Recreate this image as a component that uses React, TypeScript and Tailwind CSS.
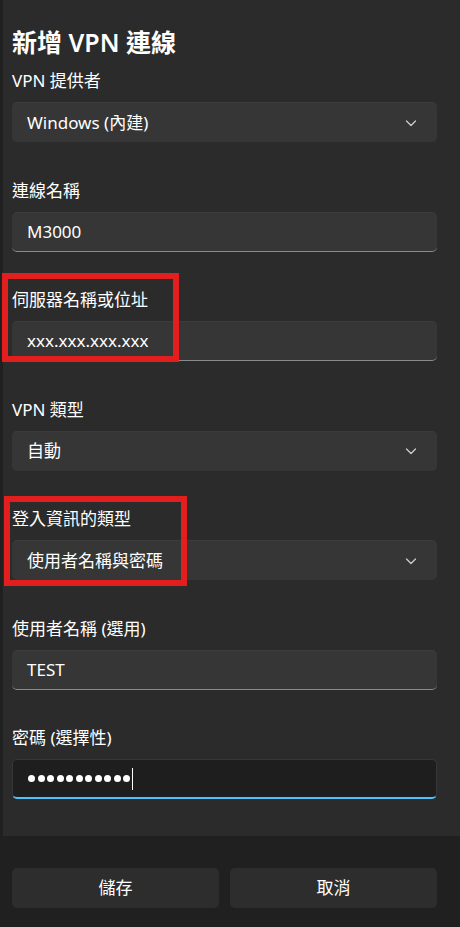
const FONT = "font-['Noto_Sans','Noto_Sans_CJK_TC',sans-serif]";

const Chevron = () => (
  <svg width="12" height="12" viewBox="0 0 12 12" fill="none" className="text-[#d0d0d0]">
    <polyline points="1.5,4 6,8.5 10.5,4" stroke="currentColor" strokeWidth="1.2" strokeLinecap="round" strokeLinejoin="round" />
  </svg>
);

type FieldProps = {
  label: string;
  value: string;
  kind: 'select' | 'input' | 'password';
};

const FIELDS: FieldProps[] = [
  { label: 'VPN 提供者', value: 'Windows (內建)', kind: 'select' },
  { label: '連線名稱', value: 'M3000', kind: 'input' },
  { label: '伺服器名稱或位址', value: 'xxx.xxx.xxx.xxx', kind: 'input' },
  { label: 'VPN 類型', value: '自動', kind: 'select' },
  { label: '登入資訊的類型', value: '使用者名稱與密碼', kind: 'select' },
  { label: '使用者名稱 (選用)', value: 'TEST', kind: 'input' },
  { label: '密碼 (選擇性)', value: '11', kind: 'password' },
];

const Field = ({ label, value, kind }: FieldProps) => {
  return (
    <div className="flex flex-col">
      <div className="h-[24px] leading-[24px] text-[17px] text-white mb-[9px]">{label}</div>

      {kind === 'select' && (
        <div className="h-[40px] rounded-[5px] bg-[#363636] border-t border-[#3c3c3c] flex items-center justify-between pl-[15px] pr-[20px]">
          <span className="text-[17px] text-white">{value}</span>
          <Chevron />
        </div>
      )}

      {kind === 'input' && (
        <div className="h-[40px] rounded-[5px] bg-[#363636] border-t border-[#3c3c3c] border-b border-b-[#8b8b8b] flex items-center pl-[15px]">
          <span className="text-[17px] text-white">{value}</span>
        </div>
      )}

      {kind === 'password' && (
        <div className="h-[40px] rounded-[5px] bg-[#1e1e1e] border border-[#363636] border-b-2 border-b-[#4cc2ff] flex items-center pl-[15px]">
          <div className="flex gap-[2.5px]">
            {Array.from({ length: Number(value) }).map((_, i) => (
              <span key={i} className="w-[7px] h-[7px] rounded-full bg-white" />
            ))}
          </div>
          <span className="w-px h-[22px] bg-white ml-[2px]" />
        </div>
      )}
    </div>
  );
};

export default function App() {
  return (
    <div className={`${FONT} w-[460px] h-[927px] bg-[#202020] border-l-[3px] border-[#202020] flex flex-col relative`}>
      <div className="flex-1 bg-[#2b2b2b] pl-[9px] pr-[23px] pt-[26px]">
        <h1 className="text-[25px] leading-[32px] font-semibold text-white mb-[11px]">新增 VPN 連線</h1>

        <div className="flex flex-col gap-[36.5px]">
          {FIELDS.map((f) => (
            <Field key={f.label} {...f} />
          ))}
        </div>
      </div>

      <div className="h-[91px] shrink-0 bg-[#202020] pl-[9px] pr-[23px] pt-[32px] flex gap-[11px]">
        <button className="flex-1 h-[40px] rounded-[5px] bg-[#2d2d2d] text-[17px] text-white">儲存</button>
        <button className="flex-1 h-[40px] rounded-[5px] bg-[#2d2d2d] text-[17px] text-white">取消</button>
      </div>

      {/* annotation boxes */}
      <div className="absolute left-[-1px] top-[273px] w-[177px] h-[89px] border-[6px] border-[#e21e1e] pointer-events-none" />
      <div className="absolute left-[1px] top-[496px] w-[183px] h-[90px] border-[6px] border-[#e21e1e] pointer-events-none" />
    </div>
  );
}
